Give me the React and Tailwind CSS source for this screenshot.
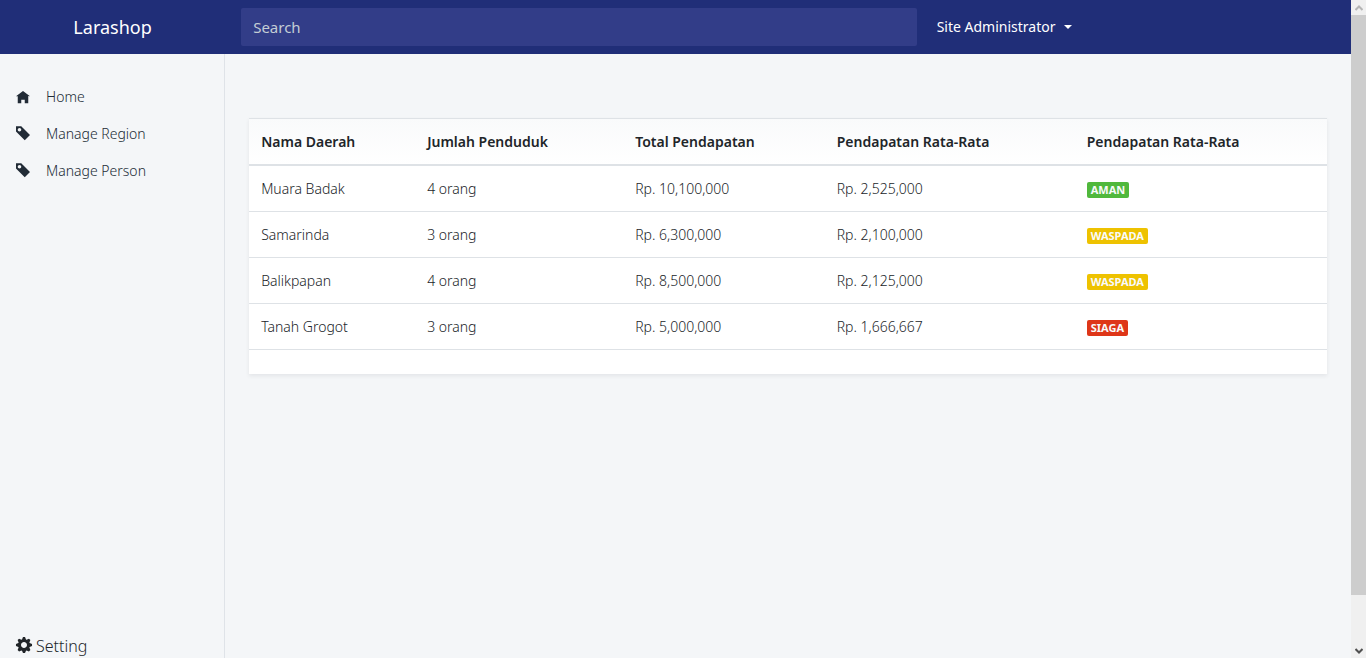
import React from "react";
import { clsx } from "clsx";

const ICONS = {
  home: "M4 .5l-4 3h1v4h2v-2h2v2h2v-4.03l1 .03-4-3z",
  tag: "M0 -.5v3l5 5 3-3-5-5h-3zm2 1c.55 0 1 .45 1 1s-.45 1-1 1-1-.45-1-1 .45-1 1-1z",
  cog: "M3.5 -.5l-.5 1.19c-.1.03-.19.08-.28.13l-1.19-.5-.72.72.5 1.19c-.05.1-.09.18-.13.28l-1.19.5v1l1.19.5c.04.1.08.18.13.28l-.5 1.19.72.72 1.19-.5c.09.04.18.09.28.13l.5 1.19h1l.5-1.19c.09-.04.19-.08.28-.13l1.19.5.72-.72-.5-1.19c.04-.09.09-.19.13-.28l1.19-.5v-1l-1.19-.5c-.03-.09-.08-.19-.13-.28l.5-1.19-.72-.72-1.19.5c-.09-.04-.19-.09-.28-.13l-.5-1.19h-1zm.5 2.5c.83 0 1.5.67 1.5 1.5s-.67 1.5-1.5 1.5-1.5-.67-1.5-1.5.67-1.5 1.5-1.5z",
};

function Icon({ name, className }) {
  return (
    <svg
      viewBox="0 0 8 8"
      fill="currentColor"
      aria-hidden="true"
      className={clsx("shrink-0 overflow-visible", className)}
    >
      <path d={ICONS[name]} />
    </svg>
  );
}

const NAV = [
  { label: "Home", icon: "home" },
  { label: "Manage Region", icon: "tag" },
  { label: "Manage Person", icon: "tag" },
];

const COLUMNS = [
  { label: "Nama Daerah", width: "w-[15.4%]" },
  { label: "Jumlah Penduduk", width: "w-[19.3%]" },
  { label: "Total Pendapatan", width: "w-[18.7%]" },
  { label: "Pendapatan Rata-Rata", width: "w-[23.2%]" },
  { label: "Pendapatan Rata-Rata", width: "w-[23.4%]" },
];

const STATUS_COLORS = {
  AMAN: "bg-[#50b83c]",
  WASPADA: "bg-[#eec200]",
  SIAGA: "bg-[#de3618]",
};

const ROWS = [
  ["Muara Badak", "4 orang", "Rp. 10,100,000", "Rp. 2,525,000", "AMAN"],
  ["Samarinda", "3 orang", "Rp. 6,300,000", "Rp. 2,100,000", "WASPADA"],
  ["Balikpapan", "4 orang", "Rp. 8,500,000", "Rp. 2,125,000", "WASPADA"],
  ["Tanah Grogot", "3 orang", "Rp. 5,000,000", "Rp. 1,666,667", "SIAGA"],
];

function Header() {
  return (
    <header className="flex items-center bg-[#202e78] py-2 text-white">
      <a href="#" className="w-1/6 text-center text-lg leading-7">
        Larashop
      </a>
      <input
        type="search"
        aria-label="Search"
        placeholder="Search"
        className="ml-4 h-[38px] w-1/2 rounded-xs bg-[#323d88] px-3 text-[15px] text-white outline-none placeholder:text-[#c4cdd5]"
      />
      <button type="button" className="ml-5 flex items-center gap-2 text-sm">
        Site Administrator
        <svg viewBox="0 0 8 4" fill="currentColor" aria-hidden="true" className="h-1 w-2">
          <path d="M0 0h8l-4 4z" />
        </svg>
      </button>
    </header>
  );
}

function Sidebar() {
  return (
    <nav className="flex w-1/6 shrink-0 flex-col justify-between border-r border-[#dfe3e8] pt-6">
      <ul>
        {NAV.map((item) => (
          <li key={item.label}>
            <a href="#" className="flex items-center gap-4 px-4 py-2 text-sm leading-[21px] font-[350] text-[#212b36]">
              <Icon name={item.icon} className="size-[14px]" />
              {item.label}
            </a>
          </li>
        ))}
      </ul>
      <a href="#" className="flex items-center gap-1 px-4 text-base leading-6 font-[350]">
        <Icon name="cog" className="size-4" />
        Setting
      </a>
    </nav>
  );
}

function RegionTable() {
  return (
    <table className="w-full table-fixed border-separate border-spacing-0 bg-white text-left text-sm leading-[21px] shadow-[0_2px_4px_rgba(33,43,54,0.08)]">
      <thead>
        <tr className="bg-linear-to-b from-[#f9fafb] to-white">
          {COLUMNS.map((column, i) => (
            <th
              key={i}
              scope="col"
              className={clsx("border-t border-b-2 border-[#dee2e6] p-3 font-semibold", column.width)}
            >
              {column.label}
            </th>
          ))}
        </tr>
      </thead>
      <tbody>
        {ROWS.map(([name, people, total, average, status]) => (
          <tr key={name}>
            {[name, people, total, average].map((value, i) => (
              <td key={i} className="border-b border-[#dee2e6] p-3 font-[350]">
                {value}
              </td>
            ))}
            <td className="border-b border-[#dee2e6] p-3">
              <span
                className={clsx(
                  "inline-block rounded-xs px-1 align-middle text-[11px] leading-4 font-bold text-[#f9fafb]",
                  STATUS_COLORS[status]
                )}
              >
                {status}
              </span>
            </td>
          </tr>
        ))}
      </tbody>
      <tfoot>
        <tr>
          <td colSpan={5} className="p-3" />
        </tr>
      </tfoot>
    </table>
  );
}

function Scrollbar() {
  return (
    <div aria-hidden="true" className="flex w-[15px] shrink-0 flex-col bg-[#f0f0f0]">
      <div className="flex h-[15px] items-center justify-center text-[#b5b5b5]">
        <svg viewBox="0 0 8 6" className="h-[6px] w-2" fill="none" stroke="currentColor" strokeWidth="2">
          <path d="M.5 5l3.5-3.5 3.5 3.5" />
        </svg>
      </div>
      <div className="flex-1">
        <div className="h-[92.4%] bg-[#cdcdcd]" />
      </div>
      <div className="flex h-[15px] items-center justify-center text-[#505050]">
        <svg viewBox="0 0 8 6" className="h-[6px] w-2" fill="none" stroke="currentColor" strokeWidth="2">
          <path d="M.5 1l3.5 3.5 3.5-3.5" />
        </svg>
      </div>
    </div>
  );
}

export default function App() {
  return (
    <div className="flex h-screen bg-[#f4f6f8] font-['Noto_Sans',sans-serif] text-[#212529]">
      <div className="flex min-w-0 flex-1 flex-col">
        <Header />
        <div className="flex min-h-0 flex-1">
          <Sidebar />
          <main className="min-w-0 flex-1 px-6 pt-16">
            <RegionTable />
          </main>
        </div>
      </div>
      <Scrollbar />
    </div>
  );
}
